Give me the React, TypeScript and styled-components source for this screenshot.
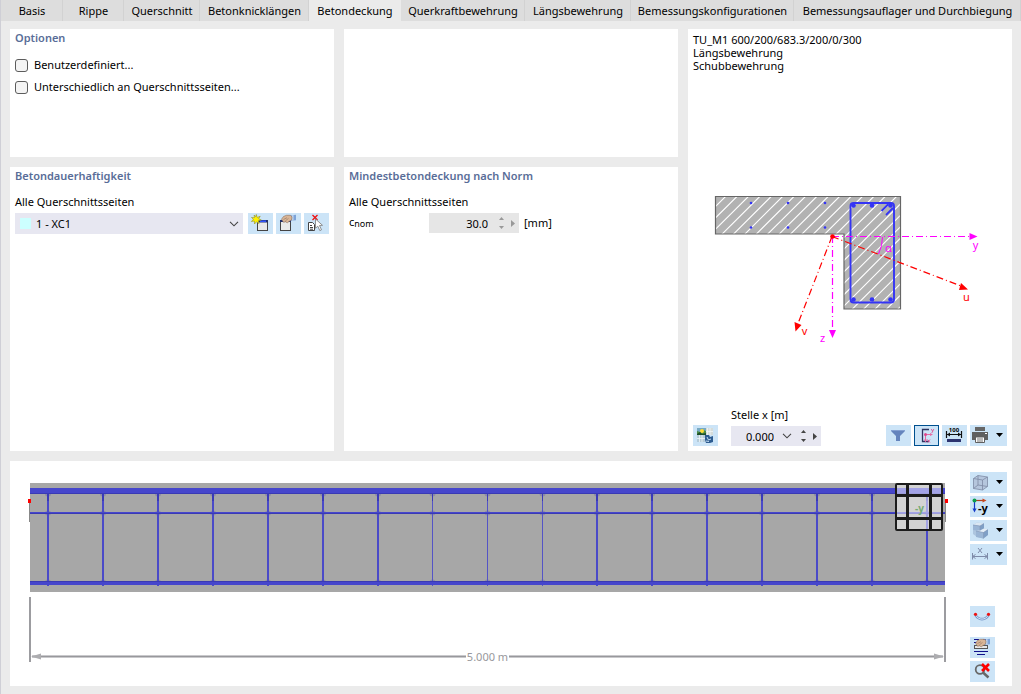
import React, { useState } from "react";
import styled, { createGlobalStyle, css } from "styled-components";

const GlobalStyle = createGlobalStyle`
  * { box-sizing: border-box; }
  body {
    margin: 0;
    background: #ebebeb;
    color: #000;
    font: 11px/14px "Noto Sans", "Open Sans", sans-serif;
  }
  button, input, select { font: inherit; color: inherit; }
  svg { display: block; }
`;

const Page = styled.div`
  min-height: 100vh;
  display: flex;
  flex-direction: column;
  border-left: 1px solid #cfcfd6;
`;

const TabBar = styled.div`
  display: grid;
  grid-template-columns: 62fr 61fr 76fr 109fr 92fr 124fr 106fr 163fr 227fr;
  height: 21px;
`;

const Tab = styled.button<{ $active: boolean }>`
  min-width: 0;
  border: 0;
  border-right: 1px solid ${(p) => (p.$active ? "#ebebeb" : "#d2d2d2")};
  padding: 0 0 0 1px;
  background: ${(p) => (p.$active ? "#ebebeb" : "#dddddd")};
  white-space: nowrap;
`;

const Content = styled.main`
  flex: 1;
  display: grid;
  grid-template-columns: 324fr 334fr 324fr;
  grid-template-rows: 128px minmax(284px, 1fr) 225px;
  gap: 10px;
  padding: 8px 9px;
`;

const Panel = styled.section`
  min-width: 0;
  background: #fff;
  padding: 2px 5px;
`;

const PreviewPanel = styled(Panel)`
  grid-column: 3;
  grid-row: 1 / 3;
  display: flex;
  flex-direction: column;
  padding: 4px 5px 5px;
`;

const BeamPanel = styled(Panel)`
  grid-column: 1 / 4;
  display: flex;
  gap: 10px;
  padding: 0 5px 0 0;
`;

const Heading = styled.h2`
  margin: 0;
  font-size: 11px;
  line-height: 14px;
  font-weight: 600;
  color: #596d98;
`;

const CheckLabel = styled.label`
  display: flex;
  align-items: center;
  gap: 6px;
  height: 22px;
`;

const CheckList = styled.div`
  padding-top: 9px;
`;

const CheckBox = styled.input`
  appearance: none;
  width: 13px;
  height: 13px;
  margin: 0;
  border: 1px solid #5c5c5c;
  border-radius: 3px;
  background: #f4f4f4;
  &:checked { background: #596d98; }
`;

const FieldLabel = styled.label`
  display: block;
  margin: 12px 0 4px;
`;

const Row = styled.div`
  display: flex;
  align-items: center;
  gap: 3px;
`;

const SelectBox = styled.div`
  position: relative;
  flex: 1;
  margin-right: 2px;
`;

const Select = styled.select`
  appearance: none;
  display: block;
  width: 100%;
  height: 21px;
  border: 0;
  border-radius: 0;
  padding: 0 21px;
  background: #e7e7f1;
`;

const Swatch = styled.span`
  position: absolute;
  left: 5px;
  top: 5px;
  width: 11px;
  height: 11px;
  background: #ccffff;
  pointer-events: none;
`;

const SelectArrow = styled.span`
  position: absolute;
  right: 4px;
  top: 8px;
  pointer-events: none;
`;

const ToolButton = styled.button<{ $wide?: boolean; $active?: boolean }>`
  flex: none;
  display: flex;
  width: ${(p) => (p.$wide ? 37 : 25)}px;
  height: 21px;
  padding: 0;
  border: 0;
  background: #cce4f7;
  ${(p) => p.$active && css`box-shadow: inset 0 0 0 1px #00508f;`}
`;

const NormRow = styled.div`
  display: flex;
  align-items: center;
  gap: 5px;
`;

const Symbol = styled.label`
  flex: none;
  width: 75px;
  small { font-size: 9px; vertical-align: -1px; }
`;

const NumberBox = styled.div<{ $disabled?: boolean }>`
  display: flex;
  align-items: center;
  width: 90px;
  height: 20px;
  background: ${(p) => (p.$disabled ? "#e6e6e6" : "#e7e7f1")};
  color: ${(p) => (p.$disabled ? "#999" : "#444")};
`;

const NumberInput = styled.input`
  flex: 1;
  min-width: 0;
  height: 20px;
  border: 0;
  padding: 0 7px 0 0;
  background: none;
  color: #000;
  text-align: right;
`;

const SpinColumn = styled.span`
  display: flex;
  flex-direction: column;
  gap: 1px;
`;

const TinyButton = styled.button<{ $tall?: boolean }>`
  display: flex;
  align-items: center;
  justify-content: center;
  width: 12px;
  height: ${(p) => (p.$tall ? 20 : 8)}px;
  padding: 0;
  border: 0;
  background: none;
  color: inherit;
`;

const DropButton = styled(TinyButton)`
  margin-right: 4px;
`;

const SectionInfo = styled.p`
  margin: 0;
  line-height: 13px;
`;

const SectionDrawing = styled.svg`
  flex: 1;
  width: 100%;
  min-height: 0;
`;

const PreviewBar = styled.div`
  display: flex;
  align-items: flex-end;
  gap: 3px;
`;

const Position = styled.div`
  flex: 1;
  display: flex;
  flex-direction: column;
  gap: 4px;
  padding-left: 10px;
`;

const BeamDrawing = styled.svg`
  flex: 1;
  min-width: 0;
  height: auto;
`;

const SideTools = styled.div`
  flex: none;
  display: flex;
  flex-direction: column;
  gap: 3px;
  width: 37px;
  padding: 11px 0 4px;
`;

const SideToolGroup = styled.div`
  display: flex;
  flex-direction: column;
  gap: 3px;
  margin: auto 0 7px;
  & + & { margin: 0; }
`;

const Icon = ({ wide, children }: { wide?: boolean; children: React.ReactNode }) => (
  <svg width={wide ? 37 : 25} height="21" viewBox={wide ? "0 0 37 21" : "0 0 25 21"} aria-hidden="true">
    {children}
    {wide && <path d="M26 8h7l-3.500 4z" fill="#000" />}
  </svg>
);

const Chevron = () => (
  <svg width="10" height="6" viewBox="0 0 10 6" aria-hidden="true">
    <path d="M1 .8l4 4 4-4" fill="none" stroke="#444" strokeWidth="1.100" />
  </svg>
);

const Hand = () => (
  <g>
    <path d="M14 2.500l6-.8v5.600l-5 .4z" fill="#7da3d8" />
    <path d="M16 2.200l1.500-.3v5.500l-1.500.2z" fill="#c3d8f0" />
    <path d="M5.500 6.200l2-2.700 3-1.200h3.800l1.700 1.500-.3 3-2.700 1.800-1.800 1.200-1.600-1-2.100.5-.8-1.300z" fill="#d9b596" stroke="#8d715c" strokeWidth=".6" />
    <path d="M7.500 6.500l3.500-1.800M9.500 7.800l3-2.400" stroke="#8d715c" strokeWidth=".6" />
  </g>
);

const NewIcon = () => (
  <Icon>
    <rect x="9.500" y="7.500" width="10" height="10" fill="#e9e9e9" stroke="#444" />
    <path d="M9 7h11v2.500H9z" fill="#22306e" />
    <path d="M12 7.500h6v1.500h-6z" fill="#3355ff" />
    <path d="M8.300 1.500l.9 3 3-1.300-1.500 2.700 2.600 1.100-2.900.7.700 3-2.500-1.900L6.500 11l-.1-3-3 .5 2-2.200L3.500 4.500l3 .2-.4-2.700 1.600 1.700z" fill="#fff200" stroke="#8f8f2c" strokeWidth=".6" />
  </Icon>
);

const EditIcon = () => (
  <Icon>
    <rect x="4.500" y="7.500" width="10" height="10" fill="#e9e9e9" stroke="#444" />
    <path d="M4 7h11v2H4z" fill="#22306e" />
    <Hand />
  </Icon>
);

const PickIcon = () => (
  <Icon>
    <path d="M4.500 9.500h4l2 2v6h-6z" fill="#fff" stroke="#444" />
    <path d="M6 12.500h2M6 14.500h3M6 16.200h3" stroke="#444" />
    <path d="M8.500 2l5 5M13.500 2l-5 5" stroke="#e11" strokeWidth="1.300" />
    <path d="M11.500 6l7 6.300-3 .2 2 4.300-1.700.8-2-4.400-2.300 2z" fill="#fff" stroke="#777" strokeWidth=".8" />
  </Icon>
);

const ImageIcon = () => (
  <Icon>
    <path d="M12 3h8v7h-8z" fill="#d5dcda" />
    <path d="M4 10h8v7H4z" fill="#b4cbd9" />
    <path d="M14.500 3v7M17 3v7M12 6.500h8M6.500 10v7M9 10v7M4 13.500h8" stroke="#f0f5f7" strokeWidth=".8" />
    <path d="M4 3h9v7H4z" fill="#4d8c45" />
    <path d="M4 3h9v3l-3-1-3 2-3-1z" fill="#77a9c2" />
    <circle cx="9" cy="6" r="2" fill="#ffdc36" />
    <path d="M4 9l3-2 2 2 4-1v2H4z" fill="#1d4f2a" />
    <path d="M12 10h4l1 2 3-1v6l-3 1h-4l-1-3z" fill="#2d5c91" />
    <path d="M14 12l1.500 3 2.500-1M13 16l3 .5" fill="none" stroke="#c4dcf2" />
  </Icon>
);

const FilterIcon = () => (
  <Icon>
    <path d="M5 5h14v1l-5 5v5h-4v-5L5 6z" fill="#6484bd" />
    <path d="M5 5h14v1H5z" fill="#83a0d2" />
  </Icon>
);

const SectionIcon = () => (
  <Icon>
    <path d="M15 4.500H8.500v12H15" fill="none" stroke="#2f3360" strokeWidth="1.300" />
    <path d="M11.500 9.500h6M11.500 9.500v6" stroke="#e66aa3" />
    <circle cx="11.500" cy="9.500" r="1.500" fill="#e0458c" />
    <path d="M16 8l3 1.500-3 1.500zM10 14.500l1.500 3 1.500-3z" fill="#e66aa3" />
    <path d="M17.300 4l1.200 2.200M19.800 4l-2 4M13.500 14.500l2.500 3M16 14.500l-2.500 3" stroke="#e0458c" strokeWidth=".8" />
  </Icon>
);

const LengthIcon = () => (
  <Icon>
    <text x="12" y="7" textAnchor="middle" fontSize="6" fontWeight="700">100</text>
    <path d="M4.500 6v7M19.500 6v7M5 9.500h14" stroke="#111" strokeWidth="1.200" />
    <path d="M5 9.500l3-2v4zM19 9.500l-3-2v4z" fill="#111" />
    <path d="M5 14h14v3H5z" fill="#2d3470" />
  </Icon>
);

const PrinterIcon = () => (
  <Icon wide>
    <path d="M5 2h10v4H5z" fill="#666" />
    <path d="M2 7h16v8h-3v-3H5v3H2z" fill="#5f5f5f" />
    <path d="M15 8.500h2" stroke="#fff" />
    <path d="M5.500 12h9v5.500h-9z" fill="#fff" stroke="#5f5f5f" />
    <path d="M7 14h6M7 16h6" stroke="#777" />
  </Icon>
);

const CubeIcon = () => (
  <Icon wide>
    <path d="M3.500 6.500l4.500-3 9.500 1.500v9.500l-5 3.500-9-1.500z" fill="#b5c6dd" />
    <path d="M3.500 6.500l9 1.500v10l-9-1.500zM3.500 6.500l4.500-3 9.500 1.500-5 3M17.500 5v9.500l-5 3.500M8 3.500v9.500l9.500 1.500M8 13l-4.500 3.500" fill="none" stroke="#7e8aa5" strokeWidth=".8" />
  </Icon>
);

const ViewIcon = () => (
  <Icon wide>
    <path d="M4.500 4.500h9" stroke="#b4401c" strokeWidth="1.200" />
    <path d="M12.500 2.500l4 2-4 2z" fill="#c8481c" />
    <path d="M4.500 5v8" stroke="#1239c8" strokeWidth="1.200" />
    <path d="M2.500 12.500l2 4 2-4z" fill="#1239c8" />
    <circle cx="4.500" cy="4.500" r="2" fill="#0a9d4d" />
    <text x="8" y="16" fontSize="11" fontWeight="700">-y</text>
  </Icon>
);

const StepsIcon = () => (
  <Icon wide>
    <path d="M3 5l4-2.500 7 1v5l3.500 1v5.500L13 18.500 7 17l-4-3z" fill="#adc5df" />
    <path d="M3 5l4-2.500 7 1L10 6z" fill="#dbe7f3" />
    <path d="M3 5l7 1v5l-7-1z" fill="#9ab5d5" />
    <path d="M10 6l4-2.500v5L10 11z" fill="#7f9fc6" />
    <path d="M6 11l4-.500 4-2 4 1-4.500 3z" fill="#e3edf7" />
    <path d="M6 11l7.500 1.500v6L6 17z" fill="#9ab5d5" />
    <path d="M13.500 12.500l4.500-3V15l-4.500 3.500z" fill="#7f9fc6" />
    <path d="M3 5l7 1v4.500M10 6l4-2.500M6 11l7.500 1.500v6M13.500 12.500l4.500-3" fill="none" stroke="#8296b5" strokeWidth=".6" />
  </Icon>
);

const DimensionIcon = () => (
  <Icon wide>
    <path d="M2.500 9v6.500M17.500 9v6.500M3 12.500h14M5.500 10.500l-3 2 3 2M14.500 10.500l3 2-3 2" fill="none" stroke="#7e8ba9" />
    <path d="M8 4l4 5M12 4L8 9" stroke="#7e8ba9" />
  </Icon>
);

const CurveIcon = () => (
  <Icon>
    <path d="M5.500 9c3 5.500 10 5.500 13 0" fill="none" stroke="#7898ca" strokeWidth="2.600" />
    <path d="M5.500 9c3 5.500 10 5.500 13 0" fill="none" stroke="#d7e6f7" strokeWidth="1" />
    <circle cx="5.500" cy="8.300" r="1.600" fill="#e11" />
    <circle cx="18.500" cy="8.300" r="1.600" fill="#e11" />
  </Icon>
);

const SettingsIcon = () => (
  <Icon>
    <path d="M4 2.500h5M13 2.500h6M4 5.500h3M4 14.500h14M7 17.500h8" stroke="#11118c" />
    <rect x="4.500" y="8.500" width="13" height="3" fill="#e8e8e8" stroke="#555" />
    <Hand />
  </Icon>
);

const ZoomResetIcon = () => (
  <Icon>
    <circle cx="10" cy="8.500" r="4.300" fill="none" stroke="#686868" strokeWidth="1.800" />
    <path d="M13 11.500l5.500 5" stroke="#686868" strokeWidth="2.500" />
    <path d="M12 3l7 7M19 3l-7 7" stroke="#f00" strokeWidth="2.600" />
  </Icon>
);

const tabs = [
  "Basis",
  "Rippe",
  "Querschnitt",
  "Betonknicklängen",
  "Betondeckung",
  "Querkraftbewehrung",
  "Längsbewehrung",
  "Bemessungskonfigurationen",
  "Bemessungsauflager und Durchbiegung",
];

const Spinner = () => (
  <>
    <SpinColumn>
      <TinyButton aria-label="Erhöhen">
        <svg width="5" height="3" viewBox="0 0 5 3"><path d="M0 3h5L2.500 0z" fill="currentColor" /></svg>
      </TinyButton>
      <TinyButton aria-label="Verringern">
        <svg width="5" height="3" viewBox="0 0 5 3"><path d="M0 0h5L2.500 3z" fill="currentColor" /></svg>
      </TinyButton>
    </SpinColumn>
    <TinyButton $tall aria-label="Weitere Optionen">
      <svg width="4" height="7" viewBox="0 0 4 7"><path d="M0 0v7l4-3.500z" fill="currentColor" /></svg>
    </TinyButton>
  </>
);

const outline = "M715.500 196.500h185V309H844v-75H715.500z";

// Diagonal hatch lines, rising to the right, spaced evenly along the top edge.
const hatchLines = Array.from({ length: 27 }, (_, i) => `M${726 + i * 11.4} 196l-114 114`).join("");

const CrossSection = () => (
  <SectionDrawing viewBox="693 72 314 336" role="img" aria-label="Querschnitt">
    <defs>
      <clipPath id="concrete"><path d={outline} /></clipPath>
    </defs>
    <path d={outline} fill="#b2b2b2" />
    <path d={hatchLines} stroke="#fff" strokeWidth="1.100" clipPath="url(#concrete)" />
    <path d={outline} fill="none" stroke="#666" strokeWidth="1.200" />
    <g fill="#3434f5">
      {[751, 788, 825].map((x) => (
        <React.Fragment key={x}>
          <circle cx={x} cy="203" r="1.300" />
          <circle cx={x} cy="227.500" r="1.300" />
        </React.Fragment>
      ))}
      {[853.5, 872, 890.5].map((x) => (
        <React.Fragment key={x}>
          <circle cx={x} cy="205.500" r="2.300" />
          <circle cx={x} cy="299.500" r="2.300" />
        </React.Fragment>
      ))}
    </g>
    <rect x="850.500" y="203" width="43.500" height="99.500" rx="3" fill="none" stroke="#3434f5" strokeWidth="1.900" />
    <path d="M881.500 211l7-7M886 215l7-7" stroke="#3434f5" strokeWidth="1.800" />
    <g fill="none" strokeWidth="1.200" strokeDasharray="7 3 1 3">
      <path d="M832 236.500h138M832.500 236v95" stroke="#f0f" />
      <path d="M832 236.500l129 49.500M832 236.500l-34 87" stroke="#f00" />
    </g>
    <path d="M882.500 237q0 9-4 17" fill="none" stroke="#f0f" />
    <path d="M969.500 233v7l8-3.500zM829 330h7l-3.500 8z" fill="#f0f" />
    <path d="M961 283l7 6.500-9 .5zM794.500 322l7 3-6 6.500z" fill="#f00" />
    <circle cx="832.500" cy="236.500" r="2.300" fill="#f00" />
    <g fontSize="11" textAnchor="middle">
      <text x="975.500" y="249" fill="#f0f">y</text>
      <text x="822.500" y="342" fill="#f0f">z</text>
      <text x="888.500" y="252" fill="#f0f">α</text>
      <text x="966.500" y="301" fill="#f00">u</text>
      <text x="804.500" y="335" fill="#f00">v</text>
    </g>
  </SectionDrawing>
);

const stirrups = [48, 103, 158, 213, 268, 323, 378, 432.5, 487.5, 542.5, 597, 652, 707, 762, 817, 872, 927];

const Beam = () => (
  <BeamDrawing viewBox="10 461 950 225" role="img" aria-label="Bewehrung, Länge 5.000 m">
    <path d="M30 483h915v109H30z" fill="#a7a7a7" />
    {stirrups.map((x, i) => {
      const thin = i > 6 && i < 10;
      return (
        <g key={x}>
          {[494, 513, 582].map((y) => (
            <ellipse key={y} cx={x} cy={y} rx="3" ry="2.500" fill="#8c8ca6" />
          ))}
          <path d={`M${x} 489v97`} stroke={thin ? "#5454c6" : "#4a4ac8"} strokeWidth={thin ? 1 : 2} />
          <path d={`M${x} 489v12`} stroke="#3a3ab8" strokeWidth={thin ? 1 : 2} />
        </g>
      );
    })}
    <path d="M30 488h915v6H30zM30 512h915v2H30zM30 581h915v4H30z" fill="#4646cc" />
    <path d="M30 493.500h915M30 581.500h915M30 513.500h915" stroke="#3a3ab4" />
    <path d="M29.500 501v21M945.500 501v21" stroke="#888" />
    <path d="M28 499h3v4h-3zM945 499h3v4h-3z" fill="#f00" />
    <rect x="896" y="484" width="46" height="46" rx="1" fill="#fff" fillOpacity=".5" stroke="#1c1c1c" strokeWidth="2" />
    <path d="M907.500 484v46M930.500 484v46M896 495.500h46M896 518.500h46" stroke="#1c1c1c" strokeWidth="3" />
    <text x="919.500" y="512" fontSize="10" fontWeight="700" textAnchor="middle" fill="#74ac74">-y</text>
    <path d="M30 597v65M945 597v65" stroke="#9c9ca0" strokeWidth="2" />
    <path d="M32 656.500h434M509 656.500h434" stroke="#c9c9cc" strokeWidth="3" />
    <path d="M32 656.500h434M509 656.500h434" stroke="#98989c" />
    <path d="M31 656.500l10-3v6zM944 656.500l-10-3v6z" fill="#adadb0" />
    <text x="487.500" y="661" fontSize="11" textAnchor="middle" fill="#98989c">5.000 m</text>
  </BeamDrawing>
);

export default function App() {
  const [active, setActive] = useState(4);
  return (
    <>
      <GlobalStyle />
      <Page>
        <TabBar role="tablist">
          {tabs.map((name, i) => (
            <Tab key={name} role="tab" aria-selected={i === active} $active={i === active} onClick={() => setActive(i)}>
              {name}
            </Tab>
          ))}
        </TabBar>
        <Content>
          <Panel>
            <Heading>Optionen</Heading>
            <CheckList>
              <CheckLabel><CheckBox type="checkbox" />Benutzerdefiniert...</CheckLabel>
              <CheckLabel><CheckBox type="checkbox" />Unterschiedlich an Querschnittsseiten...</CheckLabel>
            </CheckList>
          </Panel>
          <Panel />
          <PreviewPanel>
            <SectionInfo>
              TU_M1 600/200/683.3/200/0/300
              <br />
              Längsbewehrung
              <br />
              Schubbewehrung
            </SectionInfo>
            <CrossSection />
            <PreviewBar>
              <ToolButton aria-label="Bild kopieren"><ImageIcon /></ToolButton>
              <Position>
                <label htmlFor="position">Stelle x [m]</label>
                <NumberBox>
                  <NumberInput id="position" defaultValue="0.000" />
                  <DropButton $tall aria-label="Stelle wählen"><Chevron /></DropButton>
                  <Spinner />
                </NumberBox>
              </Position>
              <ToolButton aria-label="Filter"><FilterIcon /></ToolButton>
              <ToolButton aria-label="Achsen anzeigen" $active><SectionIcon /></ToolButton>
              <ToolButton aria-label="Bemaßung"><LengthIcon /></ToolButton>
              <ToolButton aria-label="Drucken" $wide><PrinterIcon /></ToolButton>
            </PreviewBar>
          </PreviewPanel>
          <Panel>
            <Heading>Betondauerhaftigkeit</Heading>
            <FieldLabel htmlFor="durability">Alle Querschnittsseiten</FieldLabel>
            <Row>
              <SelectBox>
                <Select id="durability"><option>1 - XC1</option></Select>
                <Swatch />
                <SelectArrow><Chevron /></SelectArrow>
              </SelectBox>
              <ToolButton aria-label="Neu"><NewIcon /></ToolButton>
              <ToolButton aria-label="Bearbeiten"><EditIcon /></ToolButton>
              <ToolButton aria-label="Auswählen"><PickIcon /></ToolButton>
            </Row>
          </Panel>
          <Panel>
            <Heading>Mindestbetondeckung nach Norm</Heading>
            <FieldLabel as="div">Alle Querschnittsseiten</FieldLabel>
            <NormRow>
              <Symbol htmlFor="cnom">c<small>nom</small></Symbol>
              <NumberBox $disabled>
                <NumberInput id="cnom" defaultValue="30.0" readOnly />
                <Spinner />
              </NumberBox>
              <span>[mm]</span>
            </NormRow>
          </Panel>
          <BeamPanel>
            <Beam />
            <SideTools>
              <ToolButton aria-label="Darstellung" $wide><CubeIcon /></ToolButton>
              <ToolButton aria-label="Ansicht" $wide><ViewIcon /></ToolButton>
              <ToolButton aria-label="Körper" $wide><StepsIcon /></ToolButton>
              <ToolButton aria-label="Maßlinien" $wide><DimensionIcon /></ToolButton>
              <SideToolGroup>
                <ToolButton aria-label="Verformung"><CurveIcon /></ToolButton>
              </SideToolGroup>
              <SideToolGroup>
                <ToolButton aria-label="Einstellungen"><SettingsIcon /></ToolButton>
                <ToolButton aria-label="Zoom zurücksetzen"><ZoomResetIcon /></ToolButton>
              </SideToolGroup>
            </SideTools>
          </BeamPanel>
        </Content>
      </Page>
    </>
  );
}
